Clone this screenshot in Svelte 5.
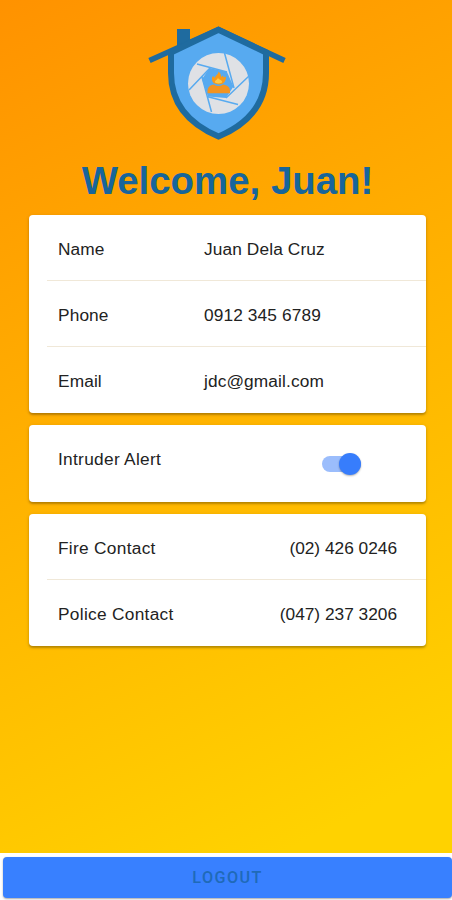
<script>
  let intruderAlert = true;

  const profile = [
    { label: 'Name', value: 'Juan Dela Cruz' },
    { label: 'Phone', value: '0912 345 6789' },
    { label: 'Email', value: 'jdc@gmail.com' }
  ];

  const contacts = [
    { label: 'Fire Contact', value: '(02) 426 0246' },
    { label: 'Police Contact', value: '(047) 237 3206' }
  ];

  function toggleAlert() {
    intruderAlert = !intruderAlert;
  }
</script>

<div class="page">
  <main class="content">
    <svg class="logo" viewBox="0 0 155 135" width="155" height="135" aria-hidden="true">
      <path d="M37 14h13v16l-13 6z" fill="#1f6b9f" />
      <path d="M9.500 45.500 78.500 14.500 144.500 45.500" fill="none" stroke="#1f6b9f" stroke-width="5.500" />
      <path
        d="M78.500 14.800 31 37.500V58C31 88 49 109 78.500 121.500 108 109 126 88 126 58V37.500Z"
        fill="#57aaf0"
        stroke="#1f6b9f"
        stroke-width="6"
      />
      <circle cx="78.500" cy="68.500" r="30.500" fill="#dfe1e5" />
      <path d="M69.500 53 87 57 93.500 71.500 86 83 68 81.500 62 64Z" fill="#57aaf0" />
      <path
        d="M57 49 87 57M84.500 38 94 73M109 61 86 83M98 89.500 67 81.500M71.500 97 62 62M49 75 70 53"
        fill="none"
        stroke="#57aaf0"
        stroke-width="1.500"
      />
      <path
        d="M73.500 68C71.500 65.500 71.500 63 73 61L75 63C75 60.500 78.500 59.500 78.500 56.500 80.500 58 81 60 81 62L83 60.500 83.500 62.500 86 61.500C86 65 85 67 83 68.500Q78.500 70.500 73.500 68Z"
        fill="#f99a18"
      />
      <path d="M75 67.500C74.500 65.500 76.500 65.500 78 63 79.500 65.500 82.500 64.500 82 67.500Q78.500 69.500 75 67.500Z" fill="#ffc845" />
      <path d="M67.500 78.300V76C67.500 71.500 71 70 74 69.500Q78.500 72.500 83 69.500C87 70 90 72 90 76V78.300Z" fill="#f39420" />
    </svg>

    <h1>Welcome, Juan!</h1>

    <section class="card">
      {#each profile as item (item.label)}
        <div class="row">
          <span class="label">{item.label}</span>
          <span class="value">{item.value}</span>
        </div>
      {/each}
    </section>

    <section class="card alert">
      <span class="alert-label">Intruder Alert</span>
      <button
        class="toggle"
        class:on={intruderAlert}
        role="switch"
        aria-checked={intruderAlert}
        aria-label="Intruder Alert"
        on:click={toggleAlert}
      >
        <span class="knob"></span>
      </button>
    </section>

    <section class="card contacts">
      {#each contacts as item (item.label)}
        <div class="row">
          <span class="label">{item.label}</span>
          <span class="value">{item.value}</span>
        </div>
      {/each}
    </section>
  </main>

  <footer>
    <button class="logout">LOGOUT</button>
  </footer>
</div>

<style>
  :global(body) {
    overflow: hidden;
  }

  .page {
    display: flex;
    flex-direction: column;
    height: 900px;
    overflow: hidden;
    font-family: "Liberation Sans", Arial, sans-serif;
    background: white;
  }

  .content {
    flex: 1;
    display: flex;
    flex-direction: column;
    box-sizing: border-box;
    padding: 15px 26px 0 29px;
    background: linear-gradient(153deg, #ff9200, #ffd200 92%);
  }

  .logo {
    display: block;
    margin-left: 111px;
    flex-shrink: 0;
  }

  h1 {
    margin: 8px 0 11.500px;
    font-size: 38.400px;
    line-height: 45px;
    font-weight: bold;
    text-align: center;
    color: #17659b;
  }

  .card {
    margin-bottom: 11.500px;
    border-radius: 4px;
    background: white;
    box-shadow: 0 2px 2px rgba(0, 0, 0, 0.22), 0 1px 4px rgba(0, 0, 0, 0.12);
    font-size: 17.300px;
    letter-spacing: 0.120px;
    color: #222;
  }

  .row {
    display: flex;
    align-items: center;
    box-sizing: border-box;
    height: 66.200px;
    margin-left: 18px;
    padding: 4px 29px 0 11px;
    border-bottom: 1px solid #f0e8d8;
  }

  .row:last-child {
    border-bottom: none;
  }

  .label {
    width: 146px;
  }

  .contacts .label,
  .alert-label {
    letter-spacing: 0.300px;
  }

  .contacts .value {
    flex: 1;
    text-align: right;
    letter-spacing: 0;
  }

  .alert {
    display: flex;
    justify-content: space-between;
    box-sizing: border-box;
    height: 77.500px;
    padding: 23px 65px 0 29px;
  }

  .alert-label {
    line-height: 22px;
  }

  .toggle {
    display: flex;
    align-items: center;
    width: 39px;
    height: 16px;
    margin-top: 8px;
    padding: 0;
    border: none;
    border-radius: 8px;
    background: #d5d5d5;
    cursor: pointer;
  }

  .toggle.on {
    justify-content: flex-end;
    background: #9bbdfc;
  }

  .knob {
    flex-shrink: 0;
    width: 22px;
    height: 22px;
    border-radius: 50%;
    background: white;
    box-shadow: 0 1px 2px rgba(0, 0, 0, 0.3);
  }

  .on .knob {
    background: #377dfc;
  }

  footer {
    height: 47px;
    box-sizing: border-box;
    padding: 4px 0 2.500px 3px;
  }

  .logout {
    display: block;
    width: 100%;
    height: 40.500px;
    padding: 0;
    border: none;
    border-radius: 4px;
    background: #3880ff;
    box-shadow: 0 1px 2px rgba(0, 0, 0, 0.35);
    font-family: Roboto, sans-serif;
    font-size: 16.200px;
    font-weight: 500;
    letter-spacing: 1.400px;
    color: #1f6ab8;
    cursor: pointer;
  }
</style>
